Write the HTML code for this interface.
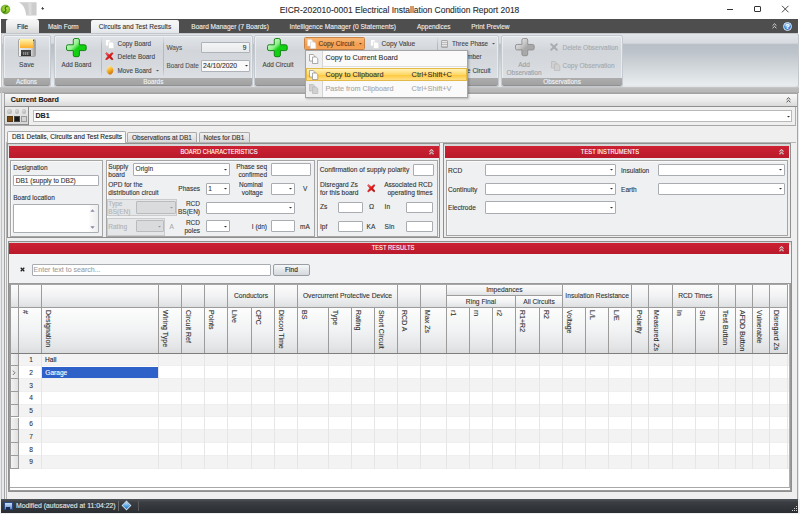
<!DOCTYPE html><html><head><meta charset="utf-8"><style>
*{margin:0;padding:0;box-sizing:border-box}
html,body{width:800px;height:514px;overflow:hidden;background:#fff;font-family:"Liberation Sans",sans-serif}
div{position:absolute}
.t{white-space:nowrap;font-family:"Liberation Sans",sans-serif;-webkit-text-stroke:0.1px currentColor}
</style></head><body><div style="left:0;top:0;width:800px;height:19px;background:#fff"></div>
<svg style="position:absolute;left:0px;top:3.5px" width="11" height="11" viewBox="0 0 11 11"><defs><radialGradient id="gg" cx="0.55" cy="0.4" r="0.6"><stop offset="0" stop-color="#c2e84e"/><stop offset="0.6" stop-color="#8cc82c"/><stop offset="1" stop-color="#4b8c12"/></radialGradient></defs><circle cx="5.45" cy="5.45" r="4.45" fill="url(#gg)" stroke="#5d9a1c" stroke-width="0.5"/><path d="M7.2 2.3 C5.2 2.6 4.6 4.2 5.6 5.2 C6.4 6 5.6 7.8 3.6 8.4" stroke="#3d7a0a" stroke-width="1.3" fill="none" stroke-linecap="round"/></svg>
<svg style="position:absolute;left:18px;top:2px" width="20" height="15" viewBox="0 0 20 15"><path d="M0.7 0.3 L18.6 0.3 L18.6 13.6 L8.2 13.6 C7.6 7.5 5.5 2.5 0.7 0.3 Z" fill="#cdcdcd"/><path d="M10 0.3 L13.5 0.3 L13.5 13.6 L10.5 13.6 C10.8 8 10.8 4 10 0.3Z" fill="#dcdcdc"/></svg>
<div style="left:41.8px;top:6.6px;width:1.2px;height:1.6px;background:#555"></div>
<svg style="position:absolute;left:40.7px;top:8.2px" width="4" height="3" viewBox="0 0 4 3"><path d="M0 0 L3.4 0 L1.7 2Z" fill="#444"/></svg>
<div class="t" style="left:279.7px;top:5.41px;font-size:8.48px;line-height:10.18px;color:#2b2b2b;">EICR-202010-0001 Electrical Installation Condition Report 2018</div>
<div style="left:727px;top:9px;width:6px;height:1px;background:#333"></div>
<div style="left:754px;top:6px;width:7px;height:6.4px;border:1px solid #333;border-radius:1px"></div>
<svg style="position:absolute;left:781px;top:5px" width="9" height="8" viewBox="0 0 9 8"><path d="M1 0.8 L7.5 7.3 M7.5 0.8 L1 7.3" stroke="#333" stroke-width="0.9"/></svg>
<div style="left:1px;top:19px;width:797px;height:14px;background:#4e4e4e"></div>
<div style="left:798px;top:19px;width:2px;height:495px;background:#fff"></div>
<div style="left:6px;top:19.2px;width:33px;height:13.8px;border-radius:3px 3px 0 0;background:linear-gradient(#f8f8f8,#eeeeee 45%,#e1e1e1 75%,#d6d8da);"></div>
<div class="t" style="left:17px;top:22.66px;font-size:6.9px;line-height:8.28px;color:#222;">File</div>
<div class="t" style="left:48px;top:22.94px;font-size:6.43px;line-height:7.72px;color:#f0f0f0;">Main Form</div>
<div style="left:91.3px;top:19.5px;width:88px;height:13.5px;border-radius:2px 2px 0 0;background:linear-gradient(#f7f7f7,#eef0f2 60%,#e2e5e8)"></div>
<div class="t" style="left:98.8px;top:22.84px;font-size:6.6px;line-height:7.92px;color:#333;">Circuits and Test Results</div>
<div class="t" style="left:191.3px;top:22.87px;font-size:6.55px;line-height:7.86px;color:#f0f0f0;">Board Manager (7 Boards)</div>
<div class="t" style="left:289.5px;top:22.83px;font-size:6.61px;line-height:7.93px;color:#f0f0f0;">Intelligence Manager (0 Statements)</div>
<div class="t" style="left:417px;top:22.95px;font-size:6.41px;line-height:7.69px;color:#f0f0f0;">Appendices</div>
<div class="t" style="left:471.3px;top:22.91px;font-size:6.49px;line-height:7.79px;color:#f0f0f0;">Print Preview</div>
<svg style="position:absolute;left:772.2px;top:23px" width="5" height="6" viewBox="0 0 5 6"><path d="M0.6 2.6 L2.5 0.8 L4.4 2.6 M0.6 5.2 L2.5 3.4 L4.4 5.2" stroke="#e8e8e8" stroke-width="0.9" fill="none"/></svg>
<div style="left:783px;top:21.6px;width:9.2px;height:9.2px;border-radius:50%;background:radial-gradient(circle at 45% 35%,#bfe0ff,#3d86d8 55%,#1d4f9c);border:0.5px solid #dfe9f5"></div>
<div class="t" style="left:782.60px;width:10px;text-align:center;top:21.90px;font-size:7.5px;line-height:9.00px;color:#fff;font-weight:bold">?</div>
<div style="left:1px;top:33px;width:797px;height:55px;background:#e2e5e8"></div>
<div style="left:1px;top:33px;width:797.5px;height:54.5px;border-radius:0 3px 3px 3px;background:linear-gradient(#e2e5e8 0%,#d7dbe0 17%,#b9bfc7 20%,#bec4cb 35%,#d3d8dc 65%,#e8ecee 96%,#e0e3e5 100%);border:1px solid #c3c7cc;border-bottom:1px solid #a5a8ac"></div>
<div style="left:2.5px;top:35px;width:48px;height:51.5px;border-radius:2px;border:1px solid #c5cad0;background:linear-gradient(#e1e4e8,#d2d6db 30%,#d6dade 60%,#e0e3e7);box-shadow:inset 0 0 0 1px rgba(255,255,255,0.45)"></div>
<div style="left:3.5px;top:78px;width:46px;height:7.5px;border-radius:0 0 2px 2px;background:linear-gradient(#acacac,#a2a2a2);border-bottom:0.6px solid #909090"></div>
<div class="t" style="left:2.50px;width:48px;text-align:center;top:78.16px;font-size:6.4px;line-height:7.68px;color:#f4f5f6;">Actions</div>
<div style="left:53.5px;top:35px;width:199.5px;height:51.5px;border-radius:2px;border:1px solid #c5cad0;background:linear-gradient(#e1e4e8,#d2d6db 30%,#d6dade 60%,#e0e3e7);box-shadow:inset 0 0 0 1px rgba(255,255,255,0.45)"></div>
<div style="left:54.5px;top:78px;width:197.5px;height:7.5px;border-radius:0 0 2px 2px;background:linear-gradient(#acacac,#a2a2a2);border-bottom:0.6px solid #909090"></div>
<div class="t" style="left:53.50px;width:199.5px;text-align:center;top:78.16px;font-size:6.4px;line-height:7.68px;color:#f4f5f6;">Boards</div>
<div style="left:254px;top:35px;width:245px;height:51.5px;border-radius:2px;border:1px solid #c5cad0;background:linear-gradient(#e1e4e8,#d2d6db 30%,#d6dade 60%,#e0e3e7);box-shadow:inset 0 0 0 1px rgba(255,255,255,0.45)"></div>
<div style="left:255px;top:78px;width:243px;height:7.5px;border-radius:0 0 2px 2px;background:linear-gradient(#acacac,#a2a2a2);border-bottom:0.6px solid #909090"></div>
<div class="t" style="left:254.00px;width:245px;text-align:center;top:78.16px;font-size:6.4px;line-height:7.68px;color:#f4f5f6;"></div>
<div style="left:501px;top:35px;width:122px;height:51.5px;border-radius:2px;border:1px solid #c5cad0;background:linear-gradient(#e1e4e8,#d2d6db 30%,#d6dade 60%,#e0e3e7);box-shadow:inset 0 0 0 1px rgba(255,255,255,0.45)"></div>
<div style="left:502px;top:78px;width:120px;height:7.5px;border-radius:0 0 2px 2px;background:linear-gradient(#acacac,#a2a2a2);border-bottom:0.6px solid #909090"></div>
<div class="t" style="left:501.00px;width:122px;text-align:center;top:78.16px;font-size:6.4px;line-height:7.68px;color:#f4f5f6;">Observations</div>
<div style="left:17.6px;top:38.6px;width:18px;height:18px;border-radius:1.5px;background:linear-gradient(90deg,#f2f2f2,#e4e4e4 20%,#d6d6d6 75%,#9c9c9c);border:0.6px solid #a5a5a5"></div>
<div style="left:19.8px;top:39.2px;width:12.8px;height:9.2px;background:linear-gradient(#fff4b0,#ffd870 45%,#ffae28)"></div>
<div style="left:32.9px;top:39.6px;width:1.5px;height:1.5px;border-radius:50%;background:#333"></div>
<div style="left:21.2px;top:50.4px;width:10.1px;height:6px;background:linear-gradient(#3c3c3c,#4c4c4c 40%,#2e2e2e)"></div>
<div style="left:23.2px;top:52.2px;width:6px;height:3.2px;background:repeating-linear-gradient(90deg,#8a8a8a 0 1.2px,#5a5a5a 1.2px 2px)"></div>
<div class="t" style="left:6.60px;width:40px;text-align:center;top:61.04px;font-size:6.6px;line-height:7.92px;color:#444;">Save</div>
<svg style="position:absolute;left:65.6px;top:37.7px" width="21.7" height="20.2" viewBox="0 0 21.7 20.2"><defs><linearGradient id="pg1" x1="0" y1="0" x2="1" y2="1"><stop offset="0.05" stop-color="#e8ffe8"/><stop offset="0.4" stop-color="#8ef08a"/><stop offset="0.55" stop-color="#12d012"/><stop offset="1" stop-color="#12d012"/></linearGradient></defs><path d="M8.9 0.5 H11.8 Q13.4 0.5 13.4 2.1 V6.8 H18.599999999999998 Q20.2 6.8 20.2 8.4 V11.0 Q20.2 12.6 18.599999999999998 12.6 H13.4 V17.099999999999998 Q13.4 18.7 11.8 18.7 H8.9 Q7.3 18.7 7.3 17.099999999999998 V12.6 H2.1 Q0.5 12.6 0.5 11.0 V8.4 Q0.5 6.8 2.1 6.8 H7.3 V2.1 Q7.3 0.5 8.9 0.5 Z" fill="url(#pg1)" stroke="#0a7a0a" stroke-width="0.9"/></svg>
<div class="t" style="left:46.50px;width:60px;text-align:center;top:60.92px;font-size:6.3px;line-height:7.56px;color:#444;">Add Board</div>
<div style="left:101px;top:37px;width:1px;height:40px;background:linear-gradient(rgba(180,185,190,0),#b4b9be 20%,#b4b9be 80%,rgba(180,185,190,0))"></div>
<div style="left:163px;top:37px;width:1px;height:40px;background:linear-gradient(rgba(180,185,190,0),#b4b9be 20%,#b4b9be 80%,rgba(180,185,190,0))"></div>
<svg style="position:absolute;left:104.8px;top:38.8px" width="10.0" height="10.0" viewBox="0 0 10 10"><path d="M0.5 0.5 H4.2 L5.8 2.1 V7 H0.5 Z" fill="#ffffff" stroke="#d8d8d8" stroke-width="0.7"/><path d="M3.5 3 H7.2 L8.8 4.6 V9.5 H3.5 Z" fill="#ffffff" stroke="#d8d8d8" stroke-width="0.7"/></svg>
<div class="t" style="left:117.6px;top:40.09px;font-size:6.35px;line-height:7.62px;color:#444;">Copy Board</div>
<svg style="position:absolute;left:105.2px;top:51.9px" width="8.6" height="8.6" viewBox="0 0 10 10"><defs><linearGradient id="rx1" x1="0" y1="0" x2="1" y2="1"><stop offset="0" stop-color="#ff8080"/><stop offset="0.4" stop-color="#ee2020"/><stop offset="1" stop-color="#a00808"/></linearGradient></defs><path d="M1.6 0.6 L5 3.2 L8.4 0.6 L9.4 1.6 L6.8 5 L9.4 8.4 L8.4 9.4 L5 6.8 L1.6 9.4 L0.6 8.4 L3.2 5 L0.6 1.6 Z" fill="url(#rx1)" stroke="#b01010" stroke-width="0.5" stroke-linejoin="round"/></svg>
<div class="t" style="left:117.6px;top:53.25px;font-size:6.41px;line-height:7.69px;color:#444;">Delete Board</div>
<svg style="position:absolute;left:105.8px;top:65.2px" width="8" height="10" viewBox="0 0 8 10"><defs><linearGradient id="mvg" x1="0.3" y1="0" x2="0.7" y2="1"><stop offset="0" stop-color="#fff2b0"/><stop offset="0.45" stop-color="#f8b830"/><stop offset="1" stop-color="#c86a08"/></linearGradient></defs><path d="M4 0.3 C5.5 1.5 7.4 3.5 7.4 5.2 C7.4 7.5 5.6 9.6 4 9.7 C2.4 9.6 0.6 7.5 0.6 5.2 C0.6 3.5 2.5 1.5 4 0.3 Z" fill="url(#mvg)"/></svg>
<div class="t" style="left:117.6px;top:67.02px;font-size:6.3px;line-height:7.56px;color:#444;">Move Board</div>
<svg style="position:absolute;left:155.5px;top:70px" width="3" height="2" viewBox="0 0 3 2"><path d="M0 0 L3 0 L1.5 1.6Z" fill="#555"/></svg>
<div class="t" style="left:166.5px;top:44.16px;font-size:6.4px;line-height:7.68px;color:#555;">Ways</div>
<div class="t" style="left:166.5px;top:62.16px;font-size:6.4px;line-height:7.68px;color:#555;">Board Date</div>
<div style="left:200.6px;top:41.7px;width:49px;height:11.5px;border:1px solid #aeb3b9;background:linear-gradient(#f3f4f5,#e8eaec);border-radius:1px"></div>
<div class="t" style="right:553.5px;top:43.54px;font-size:6.6px;line-height:7.92px;color:#333;text-align:right;">9</div>
<div style="left:200.6px;top:59.8px;width:49px;height:11.8px;border:1px solid #aeb3b9;background:#f9f9f9;border-radius:1px"></div>
<div class="t" style="left:203px;top:61.92px;font-size:6.8px;line-height:8.16px;color:#333;">24/10/2020</div>
<svg style="position:absolute;left:244.5px;top:65px" width="3" height="2" viewBox="0 0 3 2"><path d="M0 0 L3 0 L1.5 1.6Z" fill="#333"/></svg>
<svg style="position:absolute;left:267.0px;top:37.9px" width="21.7" height="20.2" viewBox="0 0 21.7 20.2"><defs><linearGradient id="pg2" x1="0" y1="0" x2="1" y2="1"><stop offset="0.05" stop-color="#e8ffe8"/><stop offset="0.4" stop-color="#8ef08a"/><stop offset="0.55" stop-color="#12d012"/><stop offset="1" stop-color="#12d012"/></linearGradient></defs><path d="M8.9 0.5 H11.8 Q13.4 0.5 13.4 2.1 V6.8 H18.599999999999998 Q20.2 6.8 20.2 8.4 V11.0 Q20.2 12.6 18.599999999999998 12.6 H13.4 V17.099999999999998 Q13.4 18.7 11.8 18.7 H8.9 Q7.3 18.7 7.3 17.099999999999998 V12.6 H2.1 Q0.5 12.6 0.5 11.0 V8.4 Q0.5 6.8 2.1 6.8 H7.3 V2.1 Q7.3 0.5 8.9 0.5 Z" fill="url(#pg2)" stroke="#0a7a0a" stroke-width="0.9"/></svg>
<div class="t" style="left:248.00px;width:60px;text-align:center;top:60.92px;font-size:6.3px;line-height:7.56px;color:#444;">Add Circuit</div>
<div style="left:437px;top:37px;width:1px;height:40px;background:linear-gradient(rgba(180,185,190,0),#b4b9be 20%,#b4b9be 80%,rgba(180,185,190,0))"></div>
<div style="left:304px;top:37px;width:61px;height:12.8px;border:1px solid #c78245;border-radius:1.5px;background:linear-gradient(#f9b878,#f6a65c 45%,#f49c4e 60%,#f5a458)"></div>
<svg style="position:absolute;left:306.5px;top:38.5px" width="10.0" height="10.0" viewBox="0 0 10 10"><path d="M0.5 0.5 H4.2 L5.8 2.1 V7 H0.5 Z" fill="#ffffff" stroke="#d8d8d8" stroke-width="0.7"/><path d="M3.5 3 H7.2 L8.8 4.6 V9.5 H3.5 Z" fill="#ffffff" stroke="#d8d8d8" stroke-width="0.7"/></svg>
<div class="t" style="left:318.5px;top:39.54px;font-size:6.6px;line-height:7.92px;color:#5a3a20;">Copy Circuit</div>
<svg style="position:absolute;left:358.8px;top:43px" width="3" height="2" viewBox="0 0 3 2"><path d="M0 0 L3 0 L1.5 1.6Z" fill="#6a4020"/></svg>
<svg style="position:absolute;left:369.5px;top:38.8px" width="10.0" height="10.0" viewBox="0 0 10 10"><path d="M0.5 0.5 H4.2 L5.8 2.1 V7 H0.5 Z" fill="#ffffff" stroke="#d8d8d8" stroke-width="0.7"/><path d="M3.5 3 H7.2 L8.8 4.6 V9.5 H3.5 Z" fill="#ffffff" stroke="#d8d8d8" stroke-width="0.7"/></svg>
<div class="t" style="left:381.6px;top:39.64px;font-size:6.6px;line-height:7.92px;color:#444;">Copy Value</div>
<div style="left:441.2px;top:39.6px;width:6.8px;height:8px;border:0.7px solid #a8a8a8;border-radius:1px;background:repeating-linear-gradient(#e8e8e8 0 1.4px,#bdbdbd 1.4px 2px)"></div>
<div class="t" style="left:452px;top:40.02px;font-size:6.3px;line-height:7.56px;color:#444;">Three Phase</div>
<svg style="position:absolute;left:491.5px;top:43px" width="3" height="2" viewBox="0 0 3 2"><path d="M0 0 L3 0 L1.5 1.6Z" fill="#555"/></svg>
<div class="t" style="left:452px;top:53.39px;font-size:6.35px;line-height:7.62px;color:#444;">Renumber</div>
<div class="t" style="left:452px;top:66.73px;font-size:6.45px;line-height:7.74px;color:#444;">Delete Circuit</div>
<svg style="position:absolute;left:514.8px;top:38.1px" width="20.7" height="19.2" viewBox="0 0 20.7 19.2"><defs><linearGradient id="pg3" x1="0" y1="0" x2="1" y2="1"><stop offset="0.05" stop-color="#f2f2f2"/><stop offset="0.4" stop-color="#c4c4c4"/><stop offset="0.55" stop-color="#a8a8a8"/><stop offset="1" stop-color="#a8a8a8"/></linearGradient></defs><path d="M8.525641025641026 0.5 H11.112820512820514 Q12.712820512820514 0.5 12.712820512820514 2.1 V6.4512820512820515 H17.564102564102562 Q19.164102564102564 6.4512820512820515 19.164102564102564 8.051282051282051 V10.353846153846154 Q19.164102564102564 11.953846153846154 17.564102564102562 11.953846153846154 H12.712820512820514 V16.14102564102564 Q12.712820512820514 17.74102564102564 11.112820512820514 17.74102564102564 H8.525641025641026 Q6.925641025641025 17.74102564102564 6.925641025641025 16.14102564102564 V11.953846153846154 H2.1 Q0.5 11.953846153846154 0.5 10.353846153846154 V8.051282051282051 Q0.5 6.4512820512820515 2.1 6.4512820512820515 H6.925641025641025 V2.1 Q6.925641025641025 0.5 8.525641025641026 0.5 Z" fill="url(#pg3)" stroke="#8c8c8c" stroke-width="0.9"/></svg>
<div class="t" style="left:504.00px;width:40px;text-align:center;top:60.50px;font-size:6.5px;line-height:7.80px;color:#9aa0a6;">Add</div>
<div class="t" style="left:494.00px;width:60px;text-align:center;top:68.50px;font-size:6.5px;line-height:7.80px;color:#9aa0a6;">Observation</div>
<svg style="position:absolute;left:550px;top:43px" width="8" height="8" viewBox="0 0 8 8"><path d="M1.2 1.2 L6.8 6.8 M6.8 1.2 L1.2 6.8" stroke="#a8aeb4" stroke-width="2" stroke-linecap="round"/></svg>
<div class="t" style="left:562.5px;top:44.10px;font-size:6.5px;line-height:7.80px;color:#a3a9af;">Delete Observation</div>
<svg style="position:absolute;left:551px;top:60.5px" width="10.0" height="10.0" viewBox="0 0 10 10"><path d="M0.5 0.5 H4.2 L5.8 2.1 V7 H0.5 Z" fill="#d0d0d0" stroke="#b8b8b8" stroke-width="0.7"/><path d="M3.5 3 H7.2 L8.8 4.6 V9.5 H3.5 Z" fill="#d0d0d0" stroke="#b8b8b8" stroke-width="0.7"/></svg>
<div class="t" style="left:562.5px;top:61.90px;font-size:6.5px;line-height:7.80px;color:#a3a9af;">Copy Observation</div>
<div style="left:0px;top:88px;width:798.5px;height:410.6px;background:#e8e9ea"></div>
<div style="left:0px;top:87.2px;width:798.5px;height:5.6px;background:linear-gradient(#c9c9c9,#bababa 30%,#b9b9b9 80%,#a2a2a2)"></div>
<div style="left:0.6px;top:91px;width:1px;height:407.6px;background:#c2c2c2"></div>
<div style="left:3.5px;top:92.5px;width:794.5px;height:406px;background:#efefef;border:1.2px solid #a3a3a3;border-right:1px solid #a5a5a5;border-bottom:none"></div>
<div style="left:4.7px;top:93.7px;width:792px;height:13px;background:linear-gradient(#f8f8f8,#ececec 50%,#dadada);border-bottom:1px solid #8e8e8e"></div>
<div class="t" style="left:10.8px;top:95.94px;font-size:7.1px;line-height:8.52px;color:#222;font-weight:bold">Current Board</div>
<svg style="position:absolute;left:785.5px;top:97px" width="5" height="6" viewBox="0 0 5 6"><path d="M0.6 2.6 L2.5 0.8 L4.4 2.6 M0.6 5.2 L2.5 3.4 L4.4 5.2" stroke="#333" stroke-width="0.9" fill="none"/></svg>
<div style="left:4.7px;top:106.5px;width:791px;height:19px;border-bottom:1px solid #a8a8a8;border-right:1px solid #b0b0b0"></div>
<div style="left:4.4px;top:106.3px;width:24.8px;height:19.2px;background:linear-gradient(#ececec,#d6d6d6);border:1px solid #8c8c8c"></div>
<div style="left:7.3999999999999995px;top:109.1px;width:4.6px;height:4.6px;border-radius:50%;background:radial-gradient(circle at 40% 35%,#d8d8d8,#a8a8a8)"></div>
<div style="left:7.3px;top:115.6px;width:5.4px;height:6.3px;background:#7a4a0c;border:0.6px solid #5a3a10"></div>
<div style="left:14.7px;top:109.1px;width:4.6px;height:4.6px;border-radius:50%;background:radial-gradient(circle at 40% 35%,#d8d8d8,#a8a8a8)"></div>
<div style="left:14.4px;top:115.6px;width:5.4px;height:6.3px;background:#1a1a1a;border:0.6px solid #444"></div>
<div style="left:21.599999999999998px;top:109.1px;width:4.6px;height:4.6px;border-radius:50%;background:radial-gradient(circle at 40% 35%,#d8d8d8,#a8a8a8)"></div>
<div style="left:21.4px;top:115.6px;width:5.4px;height:6.3px;background:#d4d4d4;border:0.6px solid #9a9a9a"></div>
<div style="left:33px;top:110.3px;width:759px;height:11.5px;background:#fff;border:1px solid #b9b9b9"></div>
<div class="t" style="left:35.5px;top:111.94px;font-size:7.1px;line-height:8.52px;color:#222;font-weight:bold">DB1</div>
<svg style="position:absolute;left:786.5px;top:115.5px" width="3" height="2" viewBox="0 0 3 2"><path d="M0 0 L3 0 L1.5 1.6Z" fill="#333"/></svg>
<div style="left:7px;top:131px;width:119px;height:11px;background:linear-gradient(#ffffff,#f2f2f2);border:1px solid #a9a9a9;border-bottom:none;border-radius:2px 2px 0 0"></div>
<div class="t" style="left:12px;top:133.27px;font-size:6.55px;line-height:7.86px;color:#222;">DB1 Details, Circuits and Test Results</div>
<div style="left:127.4px;top:132px;width:70px;height:9.5px;background:linear-gradient(#f0f0f0,#d9d9d9);border:1px solid #a9a9a9;border-bottom:none;border-radius:2px 2px 0 0"></div>
<div class="t" style="left:132px;top:133.70px;font-size:6.5px;line-height:7.80px;color:#333;">Observations at DB1</div>
<div style="left:199px;top:132px;width:50.5px;height:9.5px;background:linear-gradient(#f0f0f0,#d9d9d9);border:1px solid #a9a9a9;border-bottom:none;border-radius:2px 2px 0 0"></div>
<div class="t" style="left:203.5px;top:133.70px;font-size:6.5px;line-height:7.80px;color:#333;">Notes for DB1</div>
<div style="left:6px;top:141.5px;width:790px;height:357px;background:#efefef;border:1px solid #b5b5b5;border-bottom:none;border-right:none"></div>
<div style="left:7.5px;top:131.8px;width:117.5px;height:11px;background:#f8f8f8"></div>
<div class="t" style="left:12px;top:133.27px;font-size:6.55px;line-height:7.86px;color:#222;">DB1 Details, Circuits and Test Results</div>
<div style="left:7.4px;top:143.3px;width:432.5px;height:94.5px;border:1px solid #8f8f8f;background:linear-gradient(#d5d5d5 0,#dcdcdc 2.5px,#eceef0 2.6px)"></div>
<div style="left:8.75px;top:146.10000000000002px;width:430px;height:11.7px;background:linear-gradient(#cc2132,#c21d2f 55%,#b91a2b)"></div>
<div class="t" style="left:118.5px;top:147.9px;width:200px;text-align:center;font-size:7px;line-height:8px;color:#fff;transform:scaleX(0.83)">BOARD CHARACTERISTICS</div>
<svg style="position:absolute;left:428.75px;top:149.3px" width="5" height="6" viewBox="0 0 5 6"><path d="M0.6 2.6 L2.5 0.8 L4.4 2.6 M0.6 5.2 L2.5 3.4 L4.4 5.2" stroke="#f8e8ea" stroke-width="1.3" fill="none"/><path d="M1.2 2.6 L2.5 1.4 L3.8 2.6 M1.2 5.2 L2.5 4 L3.8 5.2" stroke="#4a1010" stroke-width="0.6" fill="none"/></svg>
<div style="left:443px;top:143.3px;width:348px;height:94.5px;border:1px solid #8f8f8f;background:linear-gradient(#d5d5d5 0,#dcdcdc 2.5px,#eceef0 2.6px)"></div>
<div style="left:444.5px;top:146.10000000000002px;width:344.5px;height:11.7px;background:linear-gradient(#cc2132,#c21d2f 55%,#b91a2b)"></div>
<div class="t" style="left:510px;top:147.9px;width:200px;text-align:center;font-size:7px;line-height:8px;color:#fff;transform:scaleX(0.83)">TEST INSTRUMENTS</div>
<svg style="position:absolute;left:779.0px;top:149.3px" width="5" height="6" viewBox="0 0 5 6"><path d="M0.6 2.6 L2.5 0.8 L4.4 2.6 M0.6 5.2 L2.5 3.4 L4.4 5.2" stroke="#f8e8ea" stroke-width="1.3" fill="none"/><path d="M1.2 2.6 L2.5 1.4 L3.8 2.6 M1.2 5.2 L2.5 4 L3.8 5.2" stroke="#4a1010" stroke-width="0.6" fill="none"/></svg>
<div style="left:10px;top:160px;width:92.5px;height:76.7px;border:1px solid #a5a5a5;background:#eef0f2;box-shadow:inset 1px 1px 0 #fafafa"></div>
<div class="t" style="left:13.2px;top:164.30px;font-size:6.5px;line-height:7.80px;color:#333;">Designation</div>
<div style="left:13.2px;top:175px;width:85.4px;height:11.3px;border:1px solid #a9acb0;background:#ffffff;border-radius:1px"></div>
<div class="t" style="left:15.7px;top:176.69px;font-size:6.6px;line-height:7.92px;color:#333;">DB1 (supply to DB2)</div>
<div class="t" style="left:13.2px;top:193.90px;font-size:6.5px;line-height:7.80px;color:#333;">Board location</div>
<div style="left:13.2px;top:204.2px;width:85.4px;height:28.6px;border:1px solid #a9acb0;background:#ffffff;border-radius:1px"></div>
<div style="left:88.5px;top:205.2px;width:9px;height:26.6px;background:linear-gradient(90deg,#fbfbfb,#eeeeee)"></div>
<svg style="position:absolute;left:90.3px;top:208.5px" width="5" height="3" viewBox="0 0 5 3"><path d="M0.3 2.7 L4.7 2.7 L2.5 0.3Z" fill="#8a8aa6"/></svg>
<svg style="position:absolute;left:90.3px;top:226px" width="5" height="3" viewBox="0 0 5 3"><path d="M0.3 0.3 L4.7 0.3 L2.5 2.7Z" fill="#8a8aa6"/></svg>
<div style="left:105.5px;top:160px;width:209px;height:76.7px;border:1px solid #a5a5a5;background:#eef0f2;box-shadow:inset 1px 1px 0 #fafafa"></div>
<div class="t" style="left:108.3px;top:162.70px;font-size:6.5px;line-height:7.80px;color:#333;">Supply</div>
<div class="t" style="left:108.3px;top:170.90px;font-size:6.5px;line-height:7.80px;color:#333;">board</div>
<div style="left:133px;top:163px;width:97px;height:12.7px;border:1px solid #a9acb0;background:#ffffff;border-radius:1px"></div>
<div class="t" style="left:135.5px;top:165.39px;font-size:6.6px;line-height:7.92px;color:#333;">Origin</div>
<svg style="position:absolute;left:224px;top:168.75px" width="3" height="2" viewBox="0 0 3 2"><path d="M0 0 L3 0 L1.5 1.6Z" fill="#333"/></svg>
<div class="t" style="right:533px;top:162.80px;font-size:6.5px;line-height:7.80px;color:#333;text-align:right;">Phase seq</div>
<div class="t" style="right:533px;top:170.90px;font-size:6.5px;line-height:7.80px;color:#333;text-align:right;">confirmed</div>
<div style="left:270.5px;top:163.4px;width:40px;height:12.3px;border:1px solid #a9acb0;background:#ffffff;border-radius:1px"></div>
<div class="t" style="left:108.3px;top:181.10px;font-size:6.5px;line-height:7.80px;color:#333;">OPD for the</div>
<div class="t" style="left:108.3px;top:188.90px;font-size:6.5px;line-height:7.80px;color:#333;">distribution circuit</div>
<div class="t" style="right:600px;top:185.30px;font-size:6.5px;line-height:7.80px;color:#333;text-align:right;">Phases</div>
<div style="left:205.8px;top:183px;width:24.2px;height:11.7px;border:1px solid #a9acb0;background:#ffffff;border-radius:1px"></div>
<div class="t" style="left:208.3px;top:184.89px;font-size:6.6px;line-height:7.92px;color:#333;">1</div>
<svg style="position:absolute;left:224.0px;top:188.25px" width="3" height="2" viewBox="0 0 3 2"><path d="M0 0 L3 0 L1.5 1.6Z" fill="#333"/></svg>
<div class="t" style="right:537.2px;top:180.90px;font-size:6.5px;line-height:7.80px;color:#333;text-align:right;">Nominal</div>
<div class="t" style="right:537.2px;top:188.60px;font-size:6.5px;line-height:7.80px;color:#333;text-align:right;">voltage</div>
<div style="left:270.5px;top:183px;width:24.8px;height:11.7px;border:1px solid #a9acb0;background:#ffffff;border-radius:1px"></div>
<svg style="position:absolute;left:289.3px;top:188.25px" width="3" height="2" viewBox="0 0 3 2"><path d="M0 0 L3 0 L1.5 1.6Z" fill="#333"/></svg>
<div class="t" style="left:303px;top:185.10px;font-size:6.5px;line-height:7.80px;color:#333;">V</div>
<div style="left:106.6px;top:199.3px;width:70.8px;height:17px;border:1px solid #c9cbcd;background:#e4e6e8"></div>
<div class="t" style="left:108.3px;top:200.10px;font-size:6.5px;line-height:7.80px;color:#b0b3b6;">Type</div>
<div class="t" style="left:108.3px;top:207.60px;font-size:6.5px;line-height:7.80px;color:#b0b3b6;">BS(EN)</div>
<div style="left:136px;top:201.3px;width:39.7px;height:12.4px;border:1px solid #b9bcbf;background:#d9dbdd;border-radius:1px"></div>
<svg style="position:absolute;left:169.7px;top:206.9px" width="3" height="2" viewBox="0 0 3 2"><path d="M0 0 L3 0 L1.5 1.6Z" fill="#999"/></svg>
<div style="left:106.6px;top:217.8px;width:58.7px;height:18.2px;border:1px solid #c9cbcd;background:#e4e6e8"></div>
<div class="t" style="left:108.3px;top:223.30px;font-size:6.5px;line-height:7.80px;color:#b0b3b6;">Rating</div>
<div style="left:136px;top:220.3px;width:27.6px;height:12.1px;border:1px solid #b9bcbf;background:#d9dbdd;border-radius:1px"></div>
<svg style="position:absolute;left:157.6px;top:225.75000000000003px" width="3" height="2" viewBox="0 0 3 2"><path d="M0 0 L3 0 L1.5 1.6Z" fill="#999"/></svg>
<div class="t" style="left:169.5px;top:223.10px;font-size:6.5px;line-height:7.80px;color:#a8abae;">A</div>
<div class="t" style="right:600px;top:200.10px;font-size:6.5px;line-height:7.80px;color:#333;text-align:right;">RCD</div>
<div class="t" style="right:600px;top:207.60px;font-size:6.5px;line-height:7.80px;color:#333;text-align:right;">BS(EN)</div>
<div style="left:205.8px;top:201.8px;width:89.5px;height:11.9px;border:1px solid #a9acb0;background:#ffffff;border-radius:1px"></div>
<svg style="position:absolute;left:289.3px;top:207.15px" width="3" height="2" viewBox="0 0 3 2"><path d="M0 0 L3 0 L1.5 1.6Z" fill="#333"/></svg>
<div class="t" style="right:600px;top:218.90px;font-size:6.5px;line-height:7.80px;color:#333;text-align:right;">RCD</div>
<div class="t" style="right:600px;top:226.70px;font-size:6.5px;line-height:7.80px;color:#333;text-align:right;">poles</div>
<div style="left:205.8px;top:220.3px;width:24.2px;height:12.1px;border:1px solid #a9acb0;background:#ffffff;border-radius:1px"></div>
<svg style="position:absolute;left:224.0px;top:225.75000000000003px" width="3" height="2" viewBox="0 0 3 2"><path d="M0 0 L3 0 L1.5 1.6Z" fill="#333"/></svg>
<div class="t" style="right:533px;top:223.10px;font-size:6.5px;line-height:7.80px;color:#333;text-align:right;">I (dn)</div>
<div style="left:270.5px;top:220.3px;width:24.8px;height:12.1px;border:1px solid #a9acb0;background:#ffffff;border-radius:1px"></div>
<div class="t" style="left:300px;top:223.10px;font-size:6.5px;line-height:7.80px;color:#333;">mA</div>
<div style="left:317.2px;top:160px;width:121px;height:76.7px;border:1px solid #a5a5a5;background:#eef0f2;box-shadow:inset 1px 1px 0 #fafafa"></div>
<div class="t" style="left:319.7px;top:166.20px;font-size:6.67px;line-height:8.00px;color:#333;">Confirmation of supply polarity</div>
<div style="left:413.2px;top:163.8px;width:21.3px;height:11.9px;border:1px solid #a9acb0;background:#ffffff;border-radius:1px"></div>
<div class="t" style="left:320px;top:181.04px;font-size:6.6px;line-height:7.92px;color:#333;">Disregard Zs</div>
<div class="t" style="left:320px;top:188.54px;font-size:6.6px;line-height:7.92px;color:#333;">for this board</div>
<svg style="position:absolute;left:366.6px;top:184.2px" width="8.6" height="8.6" viewBox="0 0 10 10"><defs><linearGradient id="rx2" x1="0" y1="0" x2="1" y2="1"><stop offset="0" stop-color="#ff8080"/><stop offset="0.4" stop-color="#ee2020"/><stop offset="1" stop-color="#a00808"/></linearGradient></defs><path d="M1.6 0.6 L5 3.2 L8.4 0.6 L9.4 1.6 L6.8 5 L9.4 8.4 L8.4 9.4 L5 6.8 L1.6 9.4 L0.6 8.4 L3.2 5 L0.6 1.6 Z" fill="url(#rx2)" stroke="#b01010" stroke-width="0.5" stroke-linejoin="round"/></svg>
<div class="t" style="right:367.5px;top:181.04px;font-size:6.6px;line-height:7.92px;color:#333;text-align:right;">Associated RCD</div>
<div class="t" style="right:367.5px;top:188.54px;font-size:6.6px;line-height:7.92px;color:#333;text-align:right;">operating times</div>
<div class="t" style="left:320px;top:203.34px;font-size:6.6px;line-height:7.92px;color:#333;">Zs</div>
<div style="left:338.4px;top:201.6px;width:24.5px;height:11.7px;border:1px solid #a9acb0;background:#ffffff;border-radius:1px"></div>
<div class="t" style="left:369px;top:203.22px;font-size:6.8px;line-height:8.16px;color:#333;">&Omega;</div>
<div class="t" style="left:384.6px;top:203.34px;font-size:6.6px;line-height:7.92px;color:#333;">In</div>
<div style="left:405.8px;top:201.6px;width:27.2px;height:11.7px;border:1px solid #a9acb0;background:#ffffff;border-radius:1px"></div>
<div class="t" style="left:320px;top:222.64px;font-size:6.6px;line-height:7.92px;color:#333;">Ipf</div>
<div style="left:338.4px;top:220.7px;width:24.5px;height:11.7px;border:1px solid #a9acb0;background:#ffffff;border-radius:1px"></div>
<div class="t" style="left:366.5px;top:222.64px;font-size:6.6px;line-height:7.92px;color:#333;">KA</div>
<div class="t" style="left:384.6px;top:222.64px;font-size:6.6px;line-height:7.92px;color:#333;">SIn</div>
<div style="left:405.8px;top:220.7px;width:27.2px;height:11.7px;border:1px solid #a9acb0;background:#ffffff;border-radius:1px"></div>
<div style="left:445.5px;top:160px;width:342.5px;height:76px;border:1px solid #a5a5a5;background:#eef0f2;box-shadow:inset 1px 1px 0 #fafafa"></div>
<div class="t" style="left:448px;top:166.54px;font-size:6.6px;line-height:7.92px;color:#333;">RCD</div>
<div style="left:485px;top:163.75px;width:130.5px;height:11.75px;border:1px solid #a9acb0;background:#ffffff;border-radius:1px"></div>
<svg style="position:absolute;left:609.5px;top:169.025px" width="3" height="2" viewBox="0 0 3 2"><path d="M0 0 L3 0 L1.5 1.6Z" fill="#333"/></svg>
<div class="t" style="left:448px;top:185.74px;font-size:6.6px;line-height:7.92px;color:#333;">Continuity</div>
<div style="left:485px;top:182.5px;width:130.5px;height:12px;border:1px solid #a9acb0;background:#ffffff;border-radius:1px"></div>
<svg style="position:absolute;left:609.5px;top:187.9px" width="3" height="2" viewBox="0 0 3 2"><path d="M0 0 L3 0 L1.5 1.6Z" fill="#333"/></svg>
<div class="t" style="left:448px;top:203.54px;font-size:6.6px;line-height:7.92px;color:#333;">Electrode</div>
<div style="left:485px;top:201.25px;width:130.5px;height:12.5px;border:1px solid #a9acb0;background:#ffffff;border-radius:1px"></div>
<svg style="position:absolute;left:609.5px;top:206.9px" width="3" height="2" viewBox="0 0 3 2"><path d="M0 0 L3 0 L1.5 1.6Z" fill="#333"/></svg>
<div class="t" style="left:621px;top:166.54px;font-size:6.6px;line-height:7.92px;color:#333;">Insulation</div>
<div style="left:658px;top:163.75px;width:126.5px;height:11.75px;border:1px solid #a9acb0;background:#ffffff;border-radius:1px"></div>
<svg style="position:absolute;left:778.5px;top:169.025px" width="3" height="2" viewBox="0 0 3 2"><path d="M0 0 L3 0 L1.5 1.6Z" fill="#333"/></svg>
<div class="t" style="left:621px;top:185.94px;font-size:6.6px;line-height:7.92px;color:#333;">Earth</div>
<div style="left:658px;top:182.5px;width:126.5px;height:12px;border:1px solid #a9acb0;background:#ffffff;border-radius:1px"></div>
<svg style="position:absolute;left:778.5px;top:187.9px" width="3" height="2" viewBox="0 0 3 2"><path d="M0 0 L3 0 L1.5 1.6Z" fill="#333"/></svg>
<div style="left:7.5px;top:241.2px;width:784.6px;height:250.5px;border:1px solid #8f8f8f;background:linear-gradient(#d5d5d5 0,#dcdcdc 2.5px,#f0f2f3 2.6px)"></div>
<div style="left:8.75px;top:242.6px;width:780.5px;height:11.6px;background:linear-gradient(#cc2132,#c21d2f 55%,#b91a2b)"></div>
<div class="t" style="left:293.3px;top:244.4px;width:200px;text-align:center;font-size:7px;line-height:8px;color:#fff;transform:scaleX(0.83)">TEST RESULTS</div>
<svg style="position:absolute;left:779.2px;top:245.8px" width="5" height="6" viewBox="0 0 5 6"><path d="M0.6 2.6 L2.5 0.8 L4.4 2.6 M0.6 5.2 L2.5 3.4 L4.4 5.2" stroke="#f8e8ea" stroke-width="1.3" fill="none"/><path d="M1.2 2.6 L2.5 1.4 L3.8 2.6 M1.2 5.2 L2.5 4 L3.8 5.2" stroke="#4a1010" stroke-width="0.6" fill="none"/></svg>
<svg style="position:absolute;left:20px;top:267.2px" width="5" height="5" viewBox="0 0 5 5"><path d="M0.7 0.7 L4.3 4.3 M4.3 0.7 L0.7 4.3" stroke="#222" stroke-width="1.25"/></svg>
<div style="left:31.5px;top:263.7px;width:239.2px;height:12px;border:1px solid #a9acb0;background:#ffffff;border-radius:1px"></div>
<div class="t" style="left:33.6px;top:265.67px;font-size:7.05px;line-height:8.46px;color:#a0a0a0;">Enter text to search...</div>
<div style="left:273.2px;top:263.5px;width:36.5px;height:12px;border:1px solid #9a9ea3;border-radius:2px;background:linear-gradient(#f6f7f8,#e4e7ea 50%,#d5d9dd)"></div>
<div class="t" style="left:273.50px;width:36px;text-align:center;top:265.54px;font-size:6.6px;line-height:7.92px;color:#222;">Find</div>
<div style="left:9.2px;top:283.3px;width:781.6px;height:207.8px;background:#fff;border:1px solid #9a9a9a;box-shadow:inset 0 0 0 1px #fdfdfd"></div>
<div style="left:10.4px;top:284.4px;width:779.2px;height:204px;background:#fff;border-right:1px solid #b0b0b0;border-bottom:1px solid #a8a8a8"></div>
<div style="left:18.25px;top:353.50px;width:771.15px;height:12.8px;background:#f3f3f3;border-bottom:1px solid #efefef"></div>
<div style="left:18.25px;top:366.30px;width:771.15px;height:12.8px;background:#ffffff;border-bottom:1px solid #efefef"></div>
<div style="left:18.25px;top:379.10px;width:771.15px;height:12.8px;background:#f3f3f3;border-bottom:1px solid #efefef"></div>
<div style="left:18.25px;top:391.90px;width:771.15px;height:12.8px;background:#ffffff;border-bottom:1px solid #efefef"></div>
<div style="left:18.25px;top:404.70px;width:771.15px;height:12.8px;background:#f3f3f3;border-bottom:1px solid #efefef"></div>
<div style="left:18.25px;top:417.50px;width:771.15px;height:12.8px;background:#ffffff;border-bottom:1px solid #efefef"></div>
<div style="left:18.25px;top:430.30px;width:771.15px;height:12.8px;background:#f3f3f3;border-bottom:1px solid #efefef"></div>
<div style="left:18.25px;top:443.10px;width:771.15px;height:12.8px;background:#ffffff;border-bottom:1px solid #efefef"></div>
<div style="left:18.25px;top:455.90px;width:771.15px;height:12.8px;background:#f3f3f3;border-bottom:1px solid #efefef"></div>
<div style="left:40.75px;top:353.5px;width:1px;height:115.20px;background:#e6e6e6"></div>
<div style="left:157.75px;top:353.5px;width:1px;height:115.20px;background:#e6e6e6"></div>
<div style="left:180.75px;top:353.5px;width:1px;height:115.20px;background:#e6e6e6"></div>
<div style="left:203.75px;top:353.5px;width:1px;height:115.20px;background:#e6e6e6"></div>
<div style="left:227.00px;top:353.5px;width:1px;height:115.20px;background:#e6e6e6"></div>
<div style="left:250.75px;top:353.5px;width:1px;height:115.20px;background:#e6e6e6"></div>
<div style="left:274.00px;top:353.5px;width:1px;height:115.20px;background:#e6e6e6"></div>
<div style="left:297.00px;top:353.5px;width:1px;height:115.20px;background:#e6e6e6"></div>
<div style="left:327.75px;top:353.5px;width:1px;height:115.20px;background:#e6e6e6"></div>
<div style="left:350.75px;top:353.5px;width:1px;height:115.20px;background:#e6e6e6"></div>
<div style="left:374.00px;top:353.5px;width:1px;height:115.20px;background:#e6e6e6"></div>
<div style="left:397.00px;top:353.5px;width:1px;height:115.20px;background:#e6e6e6"></div>
<div style="left:420.00px;top:353.5px;width:1px;height:115.20px;background:#e6e6e6"></div>
<div style="left:445.75px;top:353.5px;width:1px;height:115.20px;background:#e6e6e6"></div>
<div style="left:468.75px;top:353.5px;width:1px;height:115.20px;background:#e6e6e6"></div>
<div style="left:492.00px;top:353.5px;width:1px;height:115.20px;background:#e6e6e6"></div>
<div style="left:515.00px;top:353.5px;width:1px;height:115.20px;background:#e6e6e6"></div>
<div style="left:538.75px;top:353.5px;width:1px;height:115.20px;background:#e6e6e6"></div>
<div style="left:562.00px;top:353.5px;width:1px;height:115.20px;background:#e6e6e6"></div>
<div style="left:585.00px;top:353.5px;width:1px;height:115.20px;background:#e6e6e6"></div>
<div style="left:608.25px;top:353.5px;width:1px;height:115.20px;background:#e6e6e6"></div>
<div style="left:631.25px;top:353.5px;width:1px;height:115.20px;background:#e6e6e6"></div>
<div style="left:648.25px;top:353.5px;width:1px;height:115.20px;background:#e6e6e6"></div>
<div style="left:671.50px;top:353.5px;width:1px;height:115.20px;background:#e6e6e6"></div>
<div style="left:694.50px;top:353.5px;width:1px;height:115.20px;background:#e6e6e6"></div>
<div style="left:718.00px;top:353.5px;width:1px;height:115.20px;background:#e6e6e6"></div>
<div style="left:734.80px;top:353.5px;width:1px;height:115.20px;background:#e6e6e6"></div>
<div style="left:751.90px;top:353.5px;width:1px;height:115.20px;background:#e6e6e6"></div>
<div style="left:768.80px;top:353.5px;width:1px;height:115.20px;background:#e6e6e6"></div>
<div style="left:787.30px;top:353.5px;width:1px;height:115.20px;background:#e6e6e6"></div>
<div style="left:10.00px;top:284.00px;width:8.25px;height:23.50px;background:linear-gradient(#fdfdfd,#f1f2f3 50%,#e4e5e7 85%,#d9dadc)"></div>
<div style="left:18.25px;top:284.00px;width:23.00px;height:23.50px;background:linear-gradient(#fdfdfd,#f1f2f3 50%,#e4e5e7 85%,#d9dadc)"></div>
<div style="left:41.25px;top:284.00px;width:117.00px;height:23.50px;background:linear-gradient(#fdfdfd,#f1f2f3 50%,#e4e5e7 85%,#d9dadc)"></div>
<div style="left:158.25px;top:284.00px;width:23.00px;height:23.50px;background:linear-gradient(#fdfdfd,#f1f2f3 50%,#e4e5e7 85%,#d9dadc)"></div>
<div style="left:181.25px;top:284.00px;width:23.00px;height:23.50px;background:linear-gradient(#fdfdfd,#f1f2f3 50%,#e4e5e7 85%,#d9dadc)"></div>
<div style="left:204.25px;top:284.00px;width:23.25px;height:23.50px;background:linear-gradient(#fdfdfd,#f1f2f3 50%,#e4e5e7 85%,#d9dadc)"></div>
<div style="left:227.50px;top:284.00px;width:47.00px;height:23.50px;background:linear-gradient(#fdfdfd,#f1f2f3 50%,#e4e5e7 85%,#d9dadc)"></div>
<div class="t" style="left:227.50px;width:47.0px;text-align:center;top:292.03px;font-size:6.7px;line-height:8.04px;color:#333;">Conductors</div>
<div style="left:274.50px;top:284.00px;width:23.00px;height:23.50px;background:linear-gradient(#fdfdfd,#f1f2f3 50%,#e4e5e7 85%,#d9dadc)"></div>
<div style="left:297.50px;top:284.00px;width:100.00px;height:23.50px;background:linear-gradient(#fdfdfd,#f1f2f3 50%,#e4e5e7 85%,#d9dadc)"></div>
<div class="t" style="left:297.50px;width:100.0px;text-align:center;top:292.03px;font-size:6.7px;line-height:8.04px;color:#333;">Overcurrent Protective Device</div>
<div style="left:397.50px;top:284.00px;width:23.00px;height:23.50px;background:linear-gradient(#fdfdfd,#f1f2f3 50%,#e4e5e7 85%,#d9dadc)"></div>
<div style="left:420.50px;top:284.00px;width:25.75px;height:23.50px;background:linear-gradient(#fdfdfd,#f1f2f3 50%,#e4e5e7 85%,#d9dadc)"></div>
<div style="left:446.25px;top:284.00px;width:116.25px;height:11.50px;background:linear-gradient(#fdfdfd,#f1f2f3 50%,#e4e5e7 85%,#d9dadc)"></div>
<div class="t" style="left:446.25px;width:116.25px;text-align:center;top:285.98px;font-size:6.7px;line-height:8.04px;color:#333;">Impedances</div>
<div style="left:446.25px;top:295.50px;width:116.25px;height:12.00px;background:linear-gradient(#fdfdfd,#f1f2f3 50%,#e4e5e7 85%,#d9dadc)"></div>
<div class="t" style="left:446.25px;width:69.25px;text-align:center;top:297.58px;font-size:6.7px;line-height:8.04px;color:#333;">Ring Final</div>
<div class="t" style="left:515.50px;width:47.0px;text-align:center;top:297.58px;font-size:6.7px;line-height:8.04px;color:#333;">All Circuits</div>
<div style="left:562.50px;top:284.00px;width:69.25px;height:23.50px;background:linear-gradient(#fdfdfd,#f1f2f3 50%,#e4e5e7 85%,#d9dadc)"></div>
<div class="t" style="left:562.50px;width:69.25px;text-align:center;top:292.03px;font-size:6.7px;line-height:8.04px;color:#333;">Insulation Resistance</div>
<div style="left:631.75px;top:284.00px;width:17.00px;height:23.50px;background:linear-gradient(#fdfdfd,#f1f2f3 50%,#e4e5e7 85%,#d9dadc)"></div>
<div style="left:648.75px;top:284.00px;width:23.25px;height:23.50px;background:linear-gradient(#fdfdfd,#f1f2f3 50%,#e4e5e7 85%,#d9dadc)"></div>
<div style="left:672.00px;top:284.00px;width:46.50px;height:23.50px;background:linear-gradient(#fdfdfd,#f1f2f3 50%,#e4e5e7 85%,#d9dadc)"></div>
<div class="t" style="left:672.00px;width:46.5px;text-align:center;top:292.03px;font-size:6.7px;line-height:8.04px;color:#333;">RCD Times</div>
<div style="left:718.50px;top:284.00px;width:16.80px;height:23.50px;background:linear-gradient(#fdfdfd,#f1f2f3 50%,#e4e5e7 85%,#d9dadc)"></div>
<div style="left:735.30px;top:284.00px;width:17.10px;height:23.50px;background:linear-gradient(#fdfdfd,#f1f2f3 50%,#e4e5e7 85%,#d9dadc)"></div>
<div style="left:752.40px;top:284.00px;width:16.90px;height:23.50px;background:linear-gradient(#fdfdfd,#f1f2f3 50%,#e4e5e7 85%,#d9dadc)"></div>
<div style="left:769.30px;top:284.00px;width:18.50px;height:23.50px;background:linear-gradient(#fdfdfd,#f1f2f3 50%,#e4e5e7 85%,#d9dadc)"></div>
<div style="left:10.00px;top:307.50px;width:8.25px;height:46.00px;background:linear-gradient(#fdfdfd,#f1f2f3 50%,#e4e5e7 85%,#d9dadc)"></div>
<div style="left:18.25px;top:307.50px;width:23.00px;height:46.00px;background:linear-gradient(#fdfdfd,#f1f2f3 50%,#e4e5e7 85%,#d9dadc)"></div>
<div style="left:41.25px;top:307.50px;width:117.00px;height:46.00px;background:linear-gradient(#fdfdfd,#f1f2f3 50%,#e4e5e7 85%,#d9dadc)"></div>
<div style="left:158.25px;top:307.50px;width:23.00px;height:46.00px;background:linear-gradient(#fdfdfd,#f1f2f3 50%,#e4e5e7 85%,#d9dadc)"></div>
<div style="left:181.25px;top:307.50px;width:23.00px;height:46.00px;background:linear-gradient(#fdfdfd,#f1f2f3 50%,#e4e5e7 85%,#d9dadc)"></div>
<div style="left:204.25px;top:307.50px;width:23.25px;height:46.00px;background:linear-gradient(#fdfdfd,#f1f2f3 50%,#e4e5e7 85%,#d9dadc)"></div>
<div style="left:227.50px;top:307.50px;width:23.75px;height:46.00px;background:linear-gradient(#fdfdfd,#f1f2f3 50%,#e4e5e7 85%,#d9dadc)"></div>
<div style="left:251.25px;top:307.50px;width:23.25px;height:46.00px;background:linear-gradient(#fdfdfd,#f1f2f3 50%,#e4e5e7 85%,#d9dadc)"></div>
<div style="left:274.50px;top:307.50px;width:23.00px;height:46.00px;background:linear-gradient(#fdfdfd,#f1f2f3 50%,#e4e5e7 85%,#d9dadc)"></div>
<div style="left:297.50px;top:307.50px;width:30.75px;height:46.00px;background:linear-gradient(#fdfdfd,#f1f2f3 50%,#e4e5e7 85%,#d9dadc)"></div>
<div style="left:328.25px;top:307.50px;width:23.00px;height:46.00px;background:linear-gradient(#fdfdfd,#f1f2f3 50%,#e4e5e7 85%,#d9dadc)"></div>
<div style="left:351.25px;top:307.50px;width:23.25px;height:46.00px;background:linear-gradient(#fdfdfd,#f1f2f3 50%,#e4e5e7 85%,#d9dadc)"></div>
<div style="left:374.50px;top:307.50px;width:23.00px;height:46.00px;background:linear-gradient(#fdfdfd,#f1f2f3 50%,#e4e5e7 85%,#d9dadc)"></div>
<div style="left:397.50px;top:307.50px;width:23.00px;height:46.00px;background:linear-gradient(#fdfdfd,#f1f2f3 50%,#e4e5e7 85%,#d9dadc)"></div>
<div style="left:420.50px;top:307.50px;width:25.75px;height:46.00px;background:linear-gradient(#fdfdfd,#f1f2f3 50%,#e4e5e7 85%,#d9dadc)"></div>
<div style="left:446.25px;top:307.50px;width:23.00px;height:46.00px;background:linear-gradient(#fdfdfd,#f1f2f3 50%,#e4e5e7 85%,#d9dadc)"></div>
<div style="left:469.25px;top:307.50px;width:23.25px;height:46.00px;background:linear-gradient(#fdfdfd,#f1f2f3 50%,#e4e5e7 85%,#d9dadc)"></div>
<div style="left:492.50px;top:307.50px;width:23.00px;height:46.00px;background:linear-gradient(#fdfdfd,#f1f2f3 50%,#e4e5e7 85%,#d9dadc)"></div>
<div style="left:515.50px;top:307.50px;width:23.75px;height:46.00px;background:linear-gradient(#fdfdfd,#f1f2f3 50%,#e4e5e7 85%,#d9dadc)"></div>
<div style="left:539.25px;top:307.50px;width:23.25px;height:46.00px;background:linear-gradient(#fdfdfd,#f1f2f3 50%,#e4e5e7 85%,#d9dadc)"></div>
<div style="left:562.50px;top:307.50px;width:23.00px;height:46.00px;background:linear-gradient(#fdfdfd,#f1f2f3 50%,#e4e5e7 85%,#d9dadc)"></div>
<div style="left:585.50px;top:307.50px;width:23.25px;height:46.00px;background:linear-gradient(#fdfdfd,#f1f2f3 50%,#e4e5e7 85%,#d9dadc)"></div>
<div style="left:608.75px;top:307.50px;width:23.00px;height:46.00px;background:linear-gradient(#fdfdfd,#f1f2f3 50%,#e4e5e7 85%,#d9dadc)"></div>
<div style="left:631.75px;top:307.50px;width:17.00px;height:46.00px;background:linear-gradient(#fdfdfd,#f1f2f3 50%,#e4e5e7 85%,#d9dadc)"></div>
<div style="left:648.75px;top:307.50px;width:23.25px;height:46.00px;background:linear-gradient(#fdfdfd,#f1f2f3 50%,#e4e5e7 85%,#d9dadc)"></div>
<div style="left:672.00px;top:307.50px;width:23.00px;height:46.00px;background:linear-gradient(#fdfdfd,#f1f2f3 50%,#e4e5e7 85%,#d9dadc)"></div>
<div style="left:695.00px;top:307.50px;width:23.50px;height:46.00px;background:linear-gradient(#fdfdfd,#f1f2f3 50%,#e4e5e7 85%,#d9dadc)"></div>
<div style="left:718.50px;top:307.50px;width:16.80px;height:46.00px;background:linear-gradient(#fdfdfd,#f1f2f3 50%,#e4e5e7 85%,#d9dadc)"></div>
<div style="left:735.30px;top:307.50px;width:17.10px;height:46.00px;background:linear-gradient(#fdfdfd,#f1f2f3 50%,#e4e5e7 85%,#d9dadc)"></div>
<div style="left:752.40px;top:307.50px;width:16.90px;height:46.00px;background:linear-gradient(#fdfdfd,#f1f2f3 50%,#e4e5e7 85%,#d9dadc)"></div>
<div style="left:769.30px;top:307.50px;width:18.50px;height:46.00px;background:linear-gradient(#fdfdfd,#f1f2f3 50%,#e4e5e7 85%,#d9dadc)"></div>
<div class="t" style="left:22.15px;top:309.8px;writing-mode:vertical-rl;font-size:7.05px;line-height:7px;color:#333">#</div>
<div class="t" style="left:45.15px;top:309.8px;writing-mode:vertical-rl;font-size:7.05px;line-height:7px;color:#333">Designation</div>
<div class="t" style="left:162.15px;top:309.8px;writing-mode:vertical-rl;font-size:7.05px;line-height:7px;color:#333">Wiring Type</div>
<div class="t" style="left:185.15px;top:309.8px;writing-mode:vertical-rl;font-size:7.05px;line-height:7px;color:#333">Circuit Ref</div>
<div class="t" style="left:208.15px;top:309.8px;writing-mode:vertical-rl;font-size:7.05px;line-height:7px;color:#333">Points</div>
<div class="t" style="left:231.40px;top:309.8px;writing-mode:vertical-rl;font-size:7.05px;line-height:7px;color:#333">Live</div>
<div class="t" style="left:255.15px;top:309.8px;writing-mode:vertical-rl;font-size:7.05px;line-height:7px;color:#333">CPC</div>
<div class="t" style="left:278.40px;top:309.8px;writing-mode:vertical-rl;font-size:7.05px;line-height:7px;color:#333">Discon Time</div>
<div class="t" style="left:301.40px;top:309.8px;writing-mode:vertical-rl;font-size:7.05px;line-height:7px;color:#333">BS</div>
<div class="t" style="left:332.15px;top:309.8px;writing-mode:vertical-rl;font-size:7.05px;line-height:7px;color:#333">Type</div>
<div class="t" style="left:355.15px;top:309.8px;writing-mode:vertical-rl;font-size:7.05px;line-height:7px;color:#333">Rating</div>
<div class="t" style="left:378.40px;top:309.8px;writing-mode:vertical-rl;font-size:7.05px;line-height:7px;color:#333">Short Circuit</div>
<div class="t" style="left:401.40px;top:309.8px;writing-mode:vertical-rl;font-size:7.05px;line-height:7px;color:#333">RCD A</div>
<div class="t" style="left:424.40px;top:309.8px;writing-mode:vertical-rl;font-size:7.05px;line-height:7px;color:#333">Max Zs</div>
<div class="t" style="left:450.15px;top:309.8px;writing-mode:vertical-rl;font-size:7.05px;line-height:7px;color:#333">r1</div>
<div class="t" style="left:473.15px;top:309.8px;writing-mode:vertical-rl;font-size:7.05px;line-height:7px;color:#333">rn</div>
<div class="t" style="left:496.40px;top:309.8px;writing-mode:vertical-rl;font-size:7.05px;line-height:7px;color:#333">r2</div>
<div class="t" style="left:519.40px;top:309.8px;writing-mode:vertical-rl;font-size:7.05px;line-height:7px;color:#333">R1+R2</div>
<div class="t" style="left:543.15px;top:309.8px;writing-mode:vertical-rl;font-size:7.05px;line-height:7px;color:#333">R2</div>
<div class="t" style="left:566.40px;top:309.8px;writing-mode:vertical-rl;font-size:7.05px;line-height:7px;color:#333">Voltage</div>
<div class="t" style="left:589.40px;top:309.8px;writing-mode:vertical-rl;font-size:7.05px;line-height:7px;color:#333">L/L</div>
<div class="t" style="left:612.65px;top:309.8px;writing-mode:vertical-rl;font-size:7.05px;line-height:7px;color:#333">L/E</div>
<div class="t" style="left:635.65px;top:309.8px;writing-mode:vertical-rl;font-size:7.05px;line-height:7px;color:#333">Polarity</div>
<div class="t" style="left:652.65px;top:309.8px;writing-mode:vertical-rl;font-size:7.05px;line-height:7px;color:#333">Measured Zs</div>
<div class="t" style="left:675.90px;top:309.8px;writing-mode:vertical-rl;font-size:7.05px;line-height:7px;color:#333">In</div>
<div class="t" style="left:698.90px;top:309.8px;writing-mode:vertical-rl;font-size:7.05px;line-height:7px;color:#333">SIn</div>
<div class="t" style="left:722.40px;top:309.8px;writing-mode:vertical-rl;font-size:7.05px;line-height:7px;color:#333">Test Button</div>
<div class="t" style="left:739.20px;top:309.8px;writing-mode:vertical-rl;font-size:7.05px;line-height:7px;color:#333">AFDD Button</div>
<div class="t" style="left:756.30px;top:309.8px;writing-mode:vertical-rl;font-size:7.05px;line-height:7px;color:#333">Vulnerable</div>
<div class="t" style="left:773.20px;top:309.8px;writing-mode:vertical-rl;font-size:7.05px;line-height:7px;color:#333">Disregard Zs</div>
<div style="left:17.75px;top:284.00px;width:1px;height:23.50px;background:#9c9c9c"></div>
<div style="left:40.75px;top:284.00px;width:1px;height:23.50px;background:#9c9c9c"></div>
<div style="left:157.75px;top:284.00px;width:1px;height:23.50px;background:#9c9c9c"></div>
<div style="left:180.75px;top:284.00px;width:1px;height:23.50px;background:#9c9c9c"></div>
<div style="left:203.75px;top:284.00px;width:1px;height:23.50px;background:#9c9c9c"></div>
<div style="left:227.00px;top:284.00px;width:1px;height:23.50px;background:#9c9c9c"></div>
<div style="left:274.00px;top:284.00px;width:1px;height:23.50px;background:#9c9c9c"></div>
<div style="left:297.00px;top:284.00px;width:1px;height:23.50px;background:#9c9c9c"></div>
<div style="left:397.00px;top:284.00px;width:1px;height:23.50px;background:#9c9c9c"></div>
<div style="left:420.00px;top:284.00px;width:1px;height:23.50px;background:#9c9c9c"></div>
<div style="left:445.75px;top:284.00px;width:1px;height:23.50px;background:#9c9c9c"></div>
<div style="left:446.25px;top:295.00px;width:116.25px;height:1px;background:#9c9c9c"></div>
<div style="left:515.00px;top:295.50px;width:1px;height:12.00px;background:#9c9c9c"></div>
<div style="left:562.00px;top:284.00px;width:1px;height:23.50px;background:#9c9c9c"></div>
<div style="left:631.25px;top:284.00px;width:1px;height:23.50px;background:#9c9c9c"></div>
<div style="left:648.25px;top:284.00px;width:1px;height:23.50px;background:#9c9c9c"></div>
<div style="left:671.50px;top:284.00px;width:1px;height:23.50px;background:#9c9c9c"></div>
<div style="left:718.00px;top:284.00px;width:1px;height:23.50px;background:#9c9c9c"></div>
<div style="left:734.80px;top:284.00px;width:1px;height:23.50px;background:#9c9c9c"></div>
<div style="left:751.90px;top:284.00px;width:1px;height:23.50px;background:#9c9c9c"></div>
<div style="left:768.80px;top:284.00px;width:1px;height:23.50px;background:#9c9c9c"></div>
<div style="left:787.30px;top:284.00px;width:1px;height:23.50px;background:#9c9c9c"></div>
<div style="left:17.75px;top:307.50px;width:1px;height:46.00px;background:#9c9c9c"></div>
<div style="left:40.75px;top:307.50px;width:1px;height:46.00px;background:#9c9c9c"></div>
<div style="left:157.75px;top:307.50px;width:1px;height:46.00px;background:#9c9c9c"></div>
<div style="left:180.75px;top:307.50px;width:1px;height:46.00px;background:#9c9c9c"></div>
<div style="left:203.75px;top:307.50px;width:1px;height:46.00px;background:#9c9c9c"></div>
<div style="left:227.00px;top:307.50px;width:1px;height:46.00px;background:#9c9c9c"></div>
<div style="left:250.75px;top:307.50px;width:1px;height:46.00px;background:#9c9c9c"></div>
<div style="left:274.00px;top:307.50px;width:1px;height:46.00px;background:#9c9c9c"></div>
<div style="left:297.00px;top:307.50px;width:1px;height:46.00px;background:#9c9c9c"></div>
<div style="left:327.75px;top:307.50px;width:1px;height:46.00px;background:#9c9c9c"></div>
<div style="left:350.75px;top:307.50px;width:1px;height:46.00px;background:#9c9c9c"></div>
<div style="left:374.00px;top:307.50px;width:1px;height:46.00px;background:#9c9c9c"></div>
<div style="left:397.00px;top:307.50px;width:1px;height:46.00px;background:#9c9c9c"></div>
<div style="left:420.00px;top:307.50px;width:1px;height:46.00px;background:#9c9c9c"></div>
<div style="left:445.75px;top:307.50px;width:1px;height:46.00px;background:#9c9c9c"></div>
<div style="left:468.75px;top:307.50px;width:1px;height:46.00px;background:#9c9c9c"></div>
<div style="left:492.00px;top:307.50px;width:1px;height:46.00px;background:#9c9c9c"></div>
<div style="left:515.00px;top:307.50px;width:1px;height:46.00px;background:#9c9c9c"></div>
<div style="left:538.75px;top:307.50px;width:1px;height:46.00px;background:#9c9c9c"></div>
<div style="left:562.00px;top:307.50px;width:1px;height:46.00px;background:#9c9c9c"></div>
<div style="left:585.00px;top:307.50px;width:1px;height:46.00px;background:#9c9c9c"></div>
<div style="left:608.25px;top:307.50px;width:1px;height:46.00px;background:#9c9c9c"></div>
<div style="left:631.25px;top:307.50px;width:1px;height:46.00px;background:#9c9c9c"></div>
<div style="left:648.25px;top:307.50px;width:1px;height:46.00px;background:#9c9c9c"></div>
<div style="left:671.50px;top:307.50px;width:1px;height:46.00px;background:#9c9c9c"></div>
<div style="left:694.50px;top:307.50px;width:1px;height:46.00px;background:#9c9c9c"></div>
<div style="left:718.00px;top:307.50px;width:1px;height:46.00px;background:#9c9c9c"></div>
<div style="left:734.80px;top:307.50px;width:1px;height:46.00px;background:#9c9c9c"></div>
<div style="left:751.90px;top:307.50px;width:1px;height:46.00px;background:#9c9c9c"></div>
<div style="left:768.80px;top:307.50px;width:1px;height:46.00px;background:#9c9c9c"></div>
<div style="left:787.30px;top:307.50px;width:1px;height:46.00px;background:#9c9c9c"></div>
<div style="left:10.00px;top:307.00px;width:777.80px;height:1px;background:#9c9c9c"></div>
<div style="left:10.00px;top:353.00px;width:777.80px;height:1px;background:#7e7e7e"></div>
<div style="left:10.00px;top:284.00px;width:777.80px;height:1px;background:#a6a6a6"></div>
<div style="left:10.00px;top:284.00px;width:1px;height:184.70px;background:#9c9c9c"></div>
<div style="left:10px;top:353.50px;width:8.5px;height:12.80px;background:linear-gradient(90deg,#f3f3f3,#e1e1e1);border:1px solid #9c9c9c;border-top:none"></div>
<div class="t" style="left:21.20px;width:20px;text-align:center;top:355.94px;font-size:6.6px;line-height:7.92px;color:#333;">1</div>
<div style="left:10px;top:366.30px;width:8.5px;height:12.80px;background:linear-gradient(90deg,#f3f3f3,#e1e1e1);border:1px solid #9c9c9c;border-top:none"></div>
<div class="t" style="left:21.20px;width:20px;text-align:center;top:368.74px;font-size:6.6px;line-height:7.92px;color:#333;">2</div>
<div style="left:10px;top:379.10px;width:8.5px;height:12.80px;background:linear-gradient(90deg,#f3f3f3,#e1e1e1);border:1px solid #9c9c9c;border-top:none"></div>
<div class="t" style="left:21.20px;width:20px;text-align:center;top:381.54px;font-size:6.6px;line-height:7.92px;color:#333;">3</div>
<div style="left:10px;top:391.90px;width:8.5px;height:12.80px;background:linear-gradient(90deg,#f3f3f3,#e1e1e1);border:1px solid #9c9c9c;border-top:none"></div>
<div class="t" style="left:21.20px;width:20px;text-align:center;top:394.34px;font-size:6.6px;line-height:7.92px;color:#333;">4</div>
<div style="left:10px;top:404.70px;width:8.5px;height:12.80px;background:linear-gradient(90deg,#f3f3f3,#e1e1e1);border:1px solid #9c9c9c;border-top:none"></div>
<div class="t" style="left:21.20px;width:20px;text-align:center;top:407.14px;font-size:6.6px;line-height:7.92px;color:#333;">5</div>
<div style="left:10px;top:417.50px;width:8.5px;height:12.80px;background:linear-gradient(90deg,#f3f3f3,#e1e1e1);border:1px solid #9c9c9c;border-top:none"></div>
<div class="t" style="left:21.20px;width:20px;text-align:center;top:419.94px;font-size:6.6px;line-height:7.92px;color:#333;">6</div>
<div style="left:10px;top:430.30px;width:8.5px;height:12.80px;background:linear-gradient(90deg,#f3f3f3,#e1e1e1);border:1px solid #9c9c9c;border-top:none"></div>
<div class="t" style="left:21.20px;width:20px;text-align:center;top:432.74px;font-size:6.6px;line-height:7.92px;color:#333;">7</div>
<div style="left:10px;top:443.10px;width:8.5px;height:12.80px;background:linear-gradient(90deg,#f3f3f3,#e1e1e1);border:1px solid #9c9c9c;border-top:none"></div>
<div class="t" style="left:21.20px;width:20px;text-align:center;top:445.54px;font-size:6.6px;line-height:7.92px;color:#333;">8</div>
<div style="left:10px;top:455.90px;width:8.5px;height:12.80px;background:linear-gradient(90deg,#f3f3f3,#e1e1e1);border:1px solid #9c9c9c;border-top:none"></div>
<div class="t" style="left:21.20px;width:20px;text-align:center;top:458.34px;font-size:6.6px;line-height:7.92px;color:#333;">9</div>
<svg style="position:absolute;left:12px;top:370.00px" width="4" height="6" viewBox="0 0 4 6"><path d="M0.8 0.6 L3 2.8 L0.8 5" stroke="#555" stroke-width="0.8" fill="none"/></svg>
<div class="t" style="left:45px;top:355.94px;font-size:6.6px;line-height:7.92px;color:#222;">Hall</div>
<div style="left:41.5px;top:367.10px;width:116.5px;height:11.40px;background:#2f62c9"></div>
<div class="t" style="left:45.3px;top:368.74px;font-size:6.6px;line-height:7.92px;color:#fff;">Garage</div>
<div style="left:0px;top:498.6px;width:800px;height:15.4px;background:#f0f0f0"></div>
<div style="left:1.2px;top:498.7px;width:797.3px;height:13.9px;background:linear-gradient(#505357,#3a3d41 25%,#303337 70%,#2a2c30)"></div>
<div style="left:4px;top:502px;width:8.5px;height:8px;background:linear-gradient(#c8dcf6,#8fb0e0 60%,#5a7fc0);border:0.6px solid #2a4a80"></div>
<div style="left:6.3px;top:506.5px;width:4px;height:3.5px;background:#1a2a50"></div>
<div class="t" style="left:16px;top:501.89px;font-size:6.85px;line-height:8.22px;color:#e8e8e8;">Modified (autosaved at 11:04:22)</div>
<div style="left:118px;top:501px;width:1px;height:10px;background:#6a6a6a"></div>
<div style="left:123px;top:502px;width:7px;height:7px;transform:rotate(45deg);background:linear-gradient(135deg,#d6ecff,#4aa0e8 60%,#1f6cc0);border:0.5px solid #cde"></div>
<div style="left:138px;top:501px;width:1px;height:10px;background:#5a5a5a"></div>
<div style="left:794px;top:510px;width:1px;height:1px;background:#cfcfcf"></div>
<div style="left:796px;top:510px;width:1px;height:1px;background:#cfcfcf"></div>
<div style="left:796px;top:508px;width:1px;height:1px;background:#cfcfcf"></div>
<div style="left:792px;top:510px;width:1px;height:1px;background:#cfcfcf"></div>
<div style="left:794px;top:508px;width:1px;height:1px;background:#cfcfcf"></div>
<div style="left:796px;top:506px;width:1px;height:1px;background:#cfcfcf"></div>
<div style="left:305px;top:50px;width:163px;height:47.7px;background:#fafafa;border:1px solid #a5a5a5;box-shadow:1px 1px 2px rgba(0,0,0,0.25)"></div>
<div style="left:306px;top:51px;width:16.5px;height:45.7px;background:#efefef;border-right:1px solid #d4d4d4"></div>
<div style="left:322px;top:66.3px;width:145px;height:1px;background:#dedede"></div>
<div style="left:306px;top:68.4px;width:161px;height:12.7px;border:1px solid #e3b94a;background:linear-gradient(#fff2b8,#ffd868 50%,#ffc940 60%,#ffe08a)"></div>
<svg style="position:absolute;left:308.8px;top:54.2px" width="10.0" height="10.0" viewBox="0 0 10 10"><path d="M0.5 0.5 H4.2 L5.8 2.1 V7 H0.5 Z" fill="#fbfbfb" stroke="#8a8a8a" stroke-width="0.7"/><path d="M3.5 3 H7.2 L8.8 4.6 V9.5 H3.5 Z" fill="#fbfbfb" stroke="#8a8a8a" stroke-width="0.7"/></svg>
<div class="t" style="left:325.5px;top:53.96px;font-size:7.24px;line-height:8.69px;color:#333;">Copy to Current Board</div>
<svg style="position:absolute;left:308.8px;top:70.2px" width="10.0" height="10.0" viewBox="0 0 10 10"><path d="M0.5 0.5 H4.2 L5.8 2.1 V7 H0.5 Z" fill="#fbfbfb" stroke="#8a8a8a" stroke-width="0.7"/><path d="M3.5 3 H7.2 L8.8 4.6 V9.5 H3.5 Z" fill="#fbfbfb" stroke="#8a8a8a" stroke-width="0.7"/></svg>
<div class="t" style="left:325.5px;top:70.86px;font-size:7.24px;line-height:8.69px;color:#333;">Copy to Clipboard</div>
<div class="t" style="left:411.6px;top:70.75px;font-size:7.42px;line-height:8.90px;color:#333;">Ctrl+Shift+C</div>
<svg style="position:absolute;left:308.8px;top:84.2px" width="10.0" height="10.0" viewBox="0 0 10 10"><path d="M0.5 0.5 H4.2 L5.8 2.1 V7 H0.5 Z" fill="#d0d0d0" stroke="#b8b8b8" stroke-width="0.7"/><path d="M3.5 3 H7.2 L8.8 4.6 V9.5 H3.5 Z" fill="#d0d0d0" stroke="#b8b8b8" stroke-width="0.7"/></svg>
<div class="t" style="left:325.5px;top:84.66px;font-size:7.24px;line-height:8.69px;color:#a8a8a8;">Paste from Clipboard</div>
<div class="t" style="left:411.6px;top:84.55px;font-size:7.42px;line-height:8.90px;color:#a8a8a8;">Ctrl+Shift+V</div></body></html>
